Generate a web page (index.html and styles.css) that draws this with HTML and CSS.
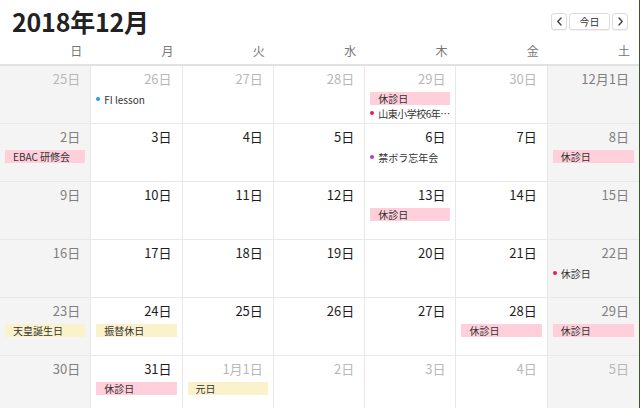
FILE: index.html
```html
<!DOCTYPE html>
<html lang="ja">
<head>
<meta charset="utf-8">
<title>2018年12月</title>
<link rel="stylesheet" href="styles.css">
</head>
<body>
<div class="app">
  <header class="top">
    <h1 class="title">2018年12月</h1>
    <div class="nav">
      <button class="btn arrow" aria-label="前へ"><svg width="7" height="9" viewBox="0 0 7 9"><polyline points="5,1 1.8,4.5 5,8" fill="none" stroke="#444" stroke-width="1.4" stroke-linecap="round" stroke-linejoin="round"/></svg></button>
      <button class="btn today">今日</button>
      <button class="btn arrow" aria-label="次へ"><svg width="7" height="9" viewBox="0 0 7 9"><polyline points="2,1 5.2,4.5 2,8" fill="none" stroke="#444" stroke-width="1.4" stroke-linecap="round" stroke-linejoin="round"/></svg></button>
    </div>
  </header>
  <div class="weekdays">
    <div class="wd">日</div><div class="wd">月</div><div class="wd">火</div><div class="wd">水</div><div class="wd">木</div><div class="wd">金</div><div class="wd">土</div>
  </div>
  <div class="grid">
    <!-- week 1 -->
    <div class="cell weekend"><div class="date other">25日</div></div>
    <div class="cell"><div class="date other">26日</div><div class="ev dot"><span class="d blue"></span><span class="t">FI lesson</span></div></div>
    <div class="cell"><div class="date other">27日</div></div>
    <div class="cell"><div class="date other">28日</div></div>
    <div class="cell"><div class="date other">29日</div><div class="ev bar pink">休診日</div><div class="ev dot"><span class="d red"></span><span class="t tight">山東小学校6年生 交流会</span></div></div>
    <div class="cell"><div class="date other">30日</div></div>
    <div class="cell weekend"><div class="date wk">12月1日</div></div>
    <!-- week 2 -->
    <div class="cell weekend"><div class="date wk">2日</div><div class="ev bar pink">EBAC 研修会</div></div>
    <div class="cell"><div class="date">3日</div></div>
    <div class="cell"><div class="date">4日</div></div>
    <div class="cell"><div class="date">5日</div></div>
    <div class="cell"><div class="date">6日</div><div class="ev dot"><span class="d purple"></span><span class="t">禁ボラ忘年会</span></div></div>
    <div class="cell"><div class="date">7日</div></div>
    <div class="cell weekend"><div class="date wk">8日</div><div class="ev bar pink">休診日</div></div>
    <!-- week 3 -->
    <div class="cell weekend"><div class="date wk">9日</div></div>
    <div class="cell"><div class="date">10日</div></div>
    <div class="cell"><div class="date">11日</div></div>
    <div class="cell"><div class="date">12日</div></div>
    <div class="cell"><div class="date">13日</div><div class="ev bar pink">休診日</div></div>
    <div class="cell"><div class="date">14日</div></div>
    <div class="cell weekend"><div class="date wk">15日</div></div>
    <!-- week 4 -->
    <div class="cell weekend"><div class="date wk">16日</div></div>
    <div class="cell"><div class="date">17日</div></div>
    <div class="cell"><div class="date">18日</div></div>
    <div class="cell"><div class="date">19日</div></div>
    <div class="cell"><div class="date">20日</div></div>
    <div class="cell"><div class="date">21日</div></div>
    <div class="cell weekend"><div class="date wk">22日</div><div class="ev dot"><span class="d red"></span><span class="t">休診日</span></div></div>
    <!-- week 5 -->
    <div class="cell weekend"><div class="date wk">23日</div><div class="ev bar yellow">天皇誕生日</div></div>
    <div class="cell"><div class="date">24日</div><div class="ev bar yellow">振替休日</div></div>
    <div class="cell"><div class="date">25日</div></div>
    <div class="cell"><div class="date">26日</div></div>
    <div class="cell"><div class="date">27日</div></div>
    <div class="cell"><div class="date">28日</div><div class="ev bar pink">休診日</div></div>
    <div class="cell weekend"><div class="date wk">29日</div><div class="ev bar pink">休診日</div></div>
    <!-- week 6 -->
    <div class="cell weekend"><div class="date wk">30日</div></div>
    <div class="cell"><div class="date">31日</div><div class="ev bar pink">休診日</div></div>
    <div class="cell"><div class="date other">1月1日</div><div class="ev bar yellow">元日</div></div>
    <div class="cell"><div class="date other">2日</div></div>
    <div class="cell"><div class="date other">3日</div></div>
    <div class="cell"><div class="date other">4日</div></div>
    <div class="cell weekend"><div class="date other">5日</div></div>
  </div>
</div>
</body>
</html>
```

FILE: styles.css
```css
* { box-sizing: border-box; }
html, body { margin: 0; padding: 0; }
body {
  background: #3c5428;
  width: 640px;
  height: 408px;
  overflow: hidden;
  font-family: "Noto Sans CJK JP", "Noto Sans", sans-serif;
  color: #333;
}
.app {
  width: 639px;
  height: 408px;
  background: #fff;
  overflow: hidden;
}
.top {
  height: 40px;
  display: flex;
  align-items: flex-start;
  justify-content: space-between;
  padding: 0 11px 0 12px;
}
.title {
  margin: 0;
  font-size: 25px;
  line-height: 25px;
  padding-top: 9px;
  font-weight: 700;
  color: #222;
  letter-spacing: -0.2px;
}
.nav {
  display: flex;
  gap: 2px;
  padding-top: 13px;
}
.btn {
  height: 17px;
  border: 1px solid #dcdcdc;
  border-radius: 3px;
  background: #fff;
  box-shadow: 0 1px 0 rgba(0,0,0,0.05);
  padding: 0;
  display: flex;
  align-items: center;
  justify-content: center;
  font-family: inherit;
  font-size: 10px;
  color: #333;
}
.btn.arrow { width: 16px; }
.btn.today { width: 41px; }
.weekdays {
  display: grid;
  grid-template-columns: repeat(7, 1fr);
  height: 26px;
  border-bottom: 2px solid #e2e2e2;
}
.wd {
  text-align: right;
  padding-right: 9px;
  font-size: 12px;
  line-height: 22px;
  color: #777;
}
.grid {
  display: grid;
  grid-template-columns: repeat(7, 1fr);
  grid-auto-rows: 58px;
}
.cell {
  border-right: 1px solid #e8e8e8;
  border-bottom: 1px solid #e8e8e8;
  padding: 5px 3px 0 4px;
  overflow: hidden;
  min-width: 0;
}
.cell:nth-child(7n) { border-right: none; }
.cell.weekend { background: #f4f4f4; }
.date {
  text-align: right;
  font-size: 13px;
  line-height: 16px;
  padding-right: 7px;
  color: #1e1e1e;
  font-weight: 400;
  margin-bottom: 5px;
}
.date.wk { color: #808080; }
.date.other { color: #b8b8b8; }
.ev {
  height: 13px;
  font-size: 10px;
  line-height: 13px;
  color: #333;
  margin-bottom: 1px;
  white-space: nowrap;
}
.ev.bar {
  margin-left: 1px;
  margin-right: 2px;
  padding-left: 8px;
  overflow: hidden;
}
.ev.pink { background: #ffd0dc; }
.ev.yellow { background: #faf2cb; }
.ev.dot {
  display: flex;
  align-items: center;
  height: 14px;
}
.ev.dot .d {
  width: 4px;
  height: 4px;
  border-radius: 50%;
  flex: none;
  margin: 0 4px 0 1px;
}
.ev.dot .t {
  overflow: hidden;
  text-overflow: ellipsis;
  min-width: 0;
}
.ev.dot .t.tight { letter-spacing: -0.5px; }
.d.blue { background: #1ba0f0; }
.d.red { background: #ea1a55; }
.d.purple { background: #b23cc4; }
```
